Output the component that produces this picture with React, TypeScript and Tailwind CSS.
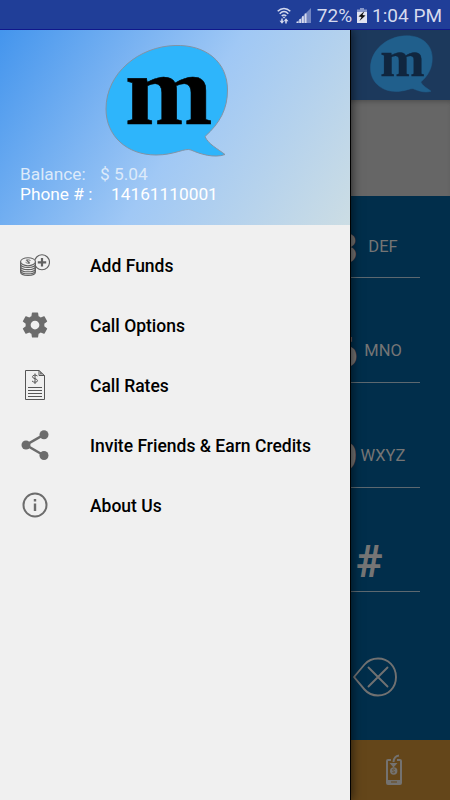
import type { ReactNode } from "react";

const BubbleLogo = ({ className, fill, ink, stroke }: { className: string; fill: string; ink: string; stroke: string }) => (
  <svg viewBox="0 0 124 114" className={className} overflow="visible">
    <path
      d="M70 1.500C101 .5 122.500 18 122.500 46C122.500 65 115 79 100 92.500C103 100 113 105 120 110.500C109 114.500 95 110 86 106C80 103.500 70 111 51 111C22 111 1 92 1 65C1 29 34 2.500 70 1.500Z"
      fill={fill}
      stroke={stroke}
      strokeWidth="1"
    />
    <text x="20" y="80" textLength="87.500" lengthAdjust="spacingAndGlyphs" fontFamily="Liberation Serif, serif" fontWeight="700" fontSize="100" fill={ink} stroke={ink} strokeWidth=".6">m</text>
  </svg>
);

const FundsIcon = () => (
  <svg viewBox="0 0 30 30" className="size-[30px]" fill="none" stroke="#606060" strokeWidth="1.100">
    <circle cx="22" cy="12.300" r="7.500" />
    <path d="M22 8v8.500M17.800 12.300h8.400" strokeWidth="2.200" />
    <path d="M.6 12v10c0 4.500 14.800 4.500 14.800 0V12z" fill="#f0f0f0" />
    <path d="M.6 14c0 4.500 14.800 4.500 14.800 0M.6 16.200c0 4.500 14.800 4.500 14.800 0M.6 18.400c0 4.500 14.800 4.500 14.800 0M.6 20.400c0 4.500 14.800 4.500 14.800 0" />
    <ellipse cx="8" cy="11.700" rx="7.400" ry="4" fill="#f0f0f0" />
    <path d="M10.500 10.500c-1.500-1-5-.8-3.900.4s3.300.4 3 1.600-3.200.6-4-.2M6.800 9.500l2.600 4.500" strokeWidth=".9" />
  </svg>
);

const GearIcon = () => (
  <svg viewBox="0 0 24 24" className="size-[30px]" fill="#6c6c6c">
    <path d="M19.430 12.980c.04-.32.070-.64.070-.98s-.03-.66-.07-.98l2.110-1.650c.19-.15.240-.42.120-.64l-2-3.460c-.12-.22-.39-.3-.61-.22l-2.490 1c-.52-.4-1.080-.73-1.690-.98l-.38-2.650C14.460 2.180 14.250 2 14 2h-4c-.25 0-.46.180-.49.420l-.38 2.650c-.61.250-1.170.590-1.690.98l-2.490-1c-.23-.09-.49 0-.61.220l-2 3.460c-.13.220-.07.490.120.640l2.110 1.650c-.04.320-.07.650-.07.980s.030.660.070.980l-2.110 1.650c-.19.150-.24.420-.12.640l2 3.460c.12.220.390.300.610.220l2.490-1c.52.400 1.080.730 1.690.980l.38 2.650c.03.240.240.420.490.420h4c.25 0 .46-.18.490-.42l.38-2.650c.61-.25 1.170-.59 1.690-.98l2.490 1c.23.090.490 0 .61-.22l2-3.460c.12-.22.070-.49-.12-.64l-2.110-1.650zM12 15.500c-1.930 0-3.500-1.570-3.500-3.500s1.570-3.500 3.500-3.500 3.500 1.570 3.500 3.500-1.570 3.500-3.500 3.500z" />
  </svg>
);

const RatesIcon = () => (
  <svg viewBox="0 0 30 30" className="size-[30px]" fill="none" stroke="#555" strokeWidth="1">
    <path d="M5.500.5h13.500l5.500 5v24h-19zM19 .5v5h5.500" />
    <path d="M20 1v3.500h4z" fill="#777" stroke="none" />
    <path d="M17.500 6c-1.500-1.500-5-1-5 .7 0 2.600 5 1.500 5 4 0 2-4 2-5.500.3M15 3.500v10.500" />
    <path d="M8 17.500h14M8 20.500h14M8 23.500h14M8 26.500h14" />
  </svg>
);

const ShareIcon = () => (
  <svg viewBox="0 0 30 30" className="size-[30px]" fill="#6c6c6c">
    <path d="M24 4.700 6 15 24 25.500" fill="none" stroke="#6c6c6c" strokeWidth="2.500" />
    <circle cx="24" cy="4.700" r="4.500" />
    <circle cx="6" cy="15" r="4.500" />
    <circle cx="24" cy="25.500" r="4.500" />
  </svg>
);

const AboutIcon = () => (
  <svg viewBox="0 0 30 30" className="size-[30px]" fill="none" stroke="#6c6c6c">
    <circle cx="15" cy="15" r="11.500" strokeWidth="2" />
    <path d="M15 13.500v7.500M15 9v2.500" strokeWidth="2.400" />
  </svg>
);

const menu: { label: string; icon: ReactNode }[] = [
  { label: "Add Funds", icon: <FundsIcon /> },
  { label: "Call Options", icon: <GearIcon /> },
  { label: "Call Rates", icon: <RatesIcon /> },
  { label: "Invite Friends & Earn Credits", icon: <ShareIcon /> },
  { label: "About Us", icon: <AboutIcon /> },
];

const StatusBar = () => (
  <div className="relative z-20 flex h-[30px] items-center justify-end border-b border-[#10178c] bg-[#203e98] pr-2 pt-px text-[19px] leading-none text-[#d5daee]">
    <svg viewBox="0 0 14 17" className="mr-[5px] h-[17px] w-[14px]" fill="none" stroke="#d5daee" strokeWidth="1.500">
      <path d="M.7 4.300c3.800-3.800 8.800-3.800 12.600 0M2.700 6.700c2.600-2.600 6-2.600 8.600 0M4.700 9c1.500-1.400 3.100-1.400 4.600 0" />
      <path d="M5.500 9.800h3L7 11.500z" fill="#d5daee" stroke="none" />
      <path d="M5 11.500V15M9 16.500V13" />
      <path d="M2.500 13.700h5L5 16.700zM6.500 14.300h5L9 11.300z" fill="#d5daee" stroke="none" />
    </svg>
    <svg viewBox="0 0 15 15" className="mr-[6px] size-[15px]">
      <path d="M0 15 15 0v15z" fill="#7185c1" />
      <path d="M1.500 15v-1.500M4.200 15v-4M6.900 15V8.200M9.600 15V5.500" stroke="#d5daee" strokeWidth="1.800" />
    </svg>
    <span>72%</span>
    <svg viewBox="0 0 10 15" className="mx-[5px] h-[15px] w-[10px]">
      <path d="M0 1.500h3V0h4v1.500h3V5H0z" fill="#8797ca" />
      <path d="M0 4h10v11H0z" fill="#e1e4f1" />
      <path d="M7.500 3 1.500 8.500 4.500 9 2.500 13 8.500 7.500 5.500 7z" fill="#111" />
    </svg>
    <span>1:04 PM</span>
  </div>
);

const Drawer = () => (
  <aside className="relative z-10 flex w-[350px] shrink-0 flex-col bg-[#f0f0f0] shadow-[1px_0_0_#000,2px_0_10px_rgba(0,0,0,0.6)]">
    <div className="flex h-[195px] flex-col bg-[linear-gradient(122deg,#4495ed_0%,#a0c8f5_52%,#ccdde4_100%)] text-[17.3px] leading-5 text-white">
      <BubbleLogo className="mt-[14px] ml-[105px] h-[114px] w-[124px]" fill="#2eb5fb" ink="#000" stroke="#8293a5" />
      <div className="mt-[6px] flex pl-5 text-[#dceafa]">
        <span className="w-20">Balance:</span>
        <span>$ 5.04</span>
      </div>
      <div className="flex pl-5">
        <span className="w-[91px]">Phone # :</span>
        <span>14161110001</span>
      </div>
    </div>
    <nav className="flex flex-col pt-[10px]">
      {menu.map((item) => (
        <a key={item.label} className="flex h-[60px] items-center gap-10 pl-5 text-[17.5px] font-medium text-black">
          {item.icon}
          <span className="pt-0.5">{item.label}</span>
        </a>
      ))}
    </nav>
  </aside>
);

const keys = [
  { digit: "3", letters: "DEF", row: "h-[82px] pt-5" },
  { digit: "6", letters: "MNO", row: "h-[105px] pt-[42px]" },
  { digit: "9", letters: "WXYZ", row: "h-[105px] pt-[42px]" },
];

// visible strip of the dialer behind the open drawer
const Dialer = () => (
  <main className="flex flex-1 flex-col bg-[#012e4b] text-[#757575]">
    <div className="h-[70px] bg-[#1c395c] pt-[5px] pl-5">
      <BubbleLogo className="h-[58px] w-[63px]" fill="#205f8c" ink="#10263f" stroke="#205f8c" />
    </div>
    <div className="h-24 bg-[#666] shadow-[inset_0_4px_4px_-2px_#505050]" />
    {keys.map(({ digit, letters, row }) => (
      <div key={digit} className={`mr-[30px] flex items-start border-b border-[#5c6870] ${row}`}>
        <span className="-ml-[17px] w-[25px] text-[43px] leading-[64px] font-bold">{digit}</span>
        <span className="w-[50px] text-center text-[16.5px] leading-[62px]">{letters}</span>
      </div>
    ))}
    <div className="mr-[30px] h-[104px] border-b border-[#5c6870] pt-[42px] pl-[6px] text-[45px] leading-[64px] font-bold">#</div>
    <div className="h-[148px] pt-[65px] pl-[3px]">
      <svg viewBox="0 0 46 40" className="h-10 w-[46px]" fill="none" stroke="#717171" strokeWidth="1.900" strokeLinecap="round">
        <path d="M1 20 11.500 7.500C15 3.500 19.500 1.500 25 1.500c10.500 0 18 8.200 18 18.500S35.500 38.500 25 38.500c-5.500 0-10-2-13.500-6z" strokeLinejoin="round" />
        <path d="M15.500 10.500 34.500 29.500M34.500 10.500 15.500 29.500" />
      </svg>
    </div>
    <div className="flex flex-1 justify-center bg-[#64461a] pt-[14px] pr-3">
      <svg viewBox="0 0 18 32" className="h-8 w-[18px]" fill="#747270">
        <path d="M3 5h3v2H3v19h12V7h-3V5h3q2 0 2 2v22q0 2-2 2H3q-2 0-2-2V7q0-2 2-2z" />
        <path d="M2 26h14v3.500H2z" />
        <path d="M6 28h6" stroke="#64461a" />
        <path d="M14 1.500Q9 2 8.500 8" fill="none" stroke="#747270" strokeWidth="2" />
        <path d="M4.500 9h8l-4 4.500z" />
        <circle cx="8.700" cy="17" r="3.700" />
        <path d="M10 15.500c-2-1.500-3.500.8-1.500 1.500s1 2.500-1.200 1.300" fill="none" stroke="#64461a" strokeWidth=".8" />
      </svg>
    </div>
  </main>
);

export default function App() {
  return (
    <div className="flex h-[800px] w-[450px] flex-col overflow-hidden font-[Roboto,sans-serif]">
      <StatusBar />
      <div className="flex flex-1">
        <Drawer />
        <Dialer />
      </div>
    </div>
  );
}
